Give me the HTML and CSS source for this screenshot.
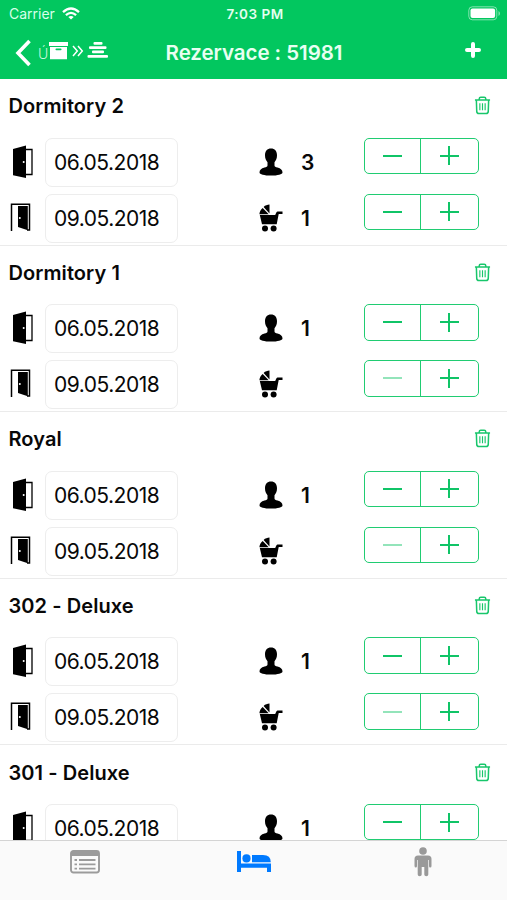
FILE: index.html
```
<!DOCTYPE html>
<html lang="cs">
<head>
<meta charset="utf-8">
<title>Rezervace</title>
<link rel="stylesheet" href="styles.css">
</head>
<body>
<svg class="defs" aria-hidden="true">
  <symbol id="door-in" viewBox="0 0 24 34"><path d="M2 4 15 .5V33L2 30.2Z"/><path d="M15 4.500h6v25h-6" fill="none" stroke="#000" stroke-width="1.300"/><circle cx="12.700" cy="17" r="1" fill="#fff"/></symbol>
  <symbol id="door-out" viewBox="0 0 24 34"><path d="M1.500 31V4.200h18V30h-2.500" fill="none" stroke="#000" stroke-width="1.500"/><path d="M8 6h9.800v24.200L8 27Z"/><circle cx="9.800" cy="18" r="1" fill="#fff"/></symbol>
  <symbol id="person" viewBox="0 0 24 28"><path d="M12 .5c3.800 0 6 2.500 6 6.800 0 3-1 5.400-2.500 6.900v3.200c0 1.200 1.200 1.500 3 2 3.300.9 5 2.600 5 5 0 1.900-4.800 3.100-11.500 3.100S.5 26.300.5 24.400c0-2.400 1.700-4.100 5-5 1.800-.5 3-.8 3-2v-3.200C7 12.700 6 10.300 6 7.300 6 3 8.200.5 12 .5Z"/></symbol>
  <symbol id="pram" viewBox="0 0 24 28"><path d="M10.500 .6v8.800L4.600 2.900C6.300 1.400 8.400.7 10.500.6ZM3.700 3.900l6 6.300H.4c.1-2.600 1.400-4.800 3.300-6.300Z"/><path d="M.8 11h15.400l1-2.300c.4-1 1-1.300 2-1.300h4.300v2.500h-3.800l-2 10.300H3Z"/><circle cx="6" cy="24.600" r="3"/><circle cx="14.600" cy="24.600" r="3"/></symbol>
  <symbol id="trash" viewBox="0 0 18 20"><path d="M1 4.300h16M5.500 4V3q0-1.700 1.700-1.700h3.600q1.700 0 1.700 1.700v1M2.500 4.500l.4 11.700q.1 2.200 2.200 2.200h7.800q2.100 0 2.200-2.200l.4-11.700" stroke-width="1.600"/><path d="M6.200 7.500v7.500M9 7.500v7.500M11.800 7.500v7.500" stroke-width="1.200"/></symbol>
</svg>

<header class="header">
  <div class="status">
    <div class="carrier"><span>Carrier</span>
      <svg width="18" height="13" viewBox="0 0 18 13" fill="none" stroke="#fff" stroke-width="2.300"><path d="M1 5.100q8-7.200 16 0M3.900 8.100q5.100-4.500 10.200 0"/><path d="M6.300 10q2.700-2.200 5.400 0L9 12.600Z" fill="#fff" stroke="none"/></svg>
    </div>
    <div class="clock">7:03 PM</div>
    <svg class="battery" width="33" height="15" viewBox="0 0 33 15"><rect x=".8" y=".8" width="28" height="13" rx="3.500" fill="none" stroke="#fff" stroke-opacity=".5"/><rect x="2.500" y="2.500" width="24.600" height="9.600" rx="2" fill="#fff"/><path d="M30.500 5v5q1.500-.6 1.500-2.500T30.500 5" fill="#fff" fill-opacity=".5"/></svg>
  </div>
  <nav class="navbar">
    <div class="back">
      <svg class="chevron" width="17" height="28" viewBox="0 0 17 28"><path d="M14.500 2 3 14l11.500 12" fill="none" stroke="#fff" stroke-width="3.600"/></svg>
      <span class="thin">Ú</span>
      <svg class="crumbs" width="60" height="20" viewBox="0 0 60 20" fill="#fff"><path d="M0 1h19v4H0ZM1 6h17v12.300H1Z"/><rect x="6.500" y="7.500" width="6" height="1.700" rx=".8" fill="#02c75f"/><path d="m24 5 4.300 5-4.300 5m5-10 4.300 5-4.300 5" fill="none" stroke="#fff" stroke-width="1.500"/><rect x="44.500" y="1" width="9" height="2.800" rx="1"/><rect x="40" y="5.200" width="17.500" height="2.800" rx="1"/><rect x="43" y="9.500" width="12" height="2.800" rx="1"/><rect x="38.500" y="13.900" width="20.500" height="2.900" rx="1"/></svg>
    </div>
    <h1 class="heading">Rezervace : 51981</h1>
    <svg class="add" width="16" height="16" viewBox="0 0 16 16"><path d="M8 2v12M2 8h12" stroke="#fff" stroke-width="4" stroke-linecap="round"/></svg>
  </nav>
</header>

<main class="rooms">
  <section class="room">
    <div class="title"><h2>Dormitory 2</h2><svg class="trash"><use href="#trash"/></svg></div>
    <div class="line"><svg class="door"><use href="#door-in"/></svg><div class="date">06.05.2018</div><svg class="guest"><use href="#person"/></svg><b class="count">3</b><div class="stepper"><i class="minus"></i><i class="plus"></i></div></div>
    <div class="line"><svg class="door out"><use href="#door-out"/></svg><div class="date">09.05.2018</div><svg class="guest"><use href="#pram"/></svg><b class="count">1</b><div class="stepper"><i class="minus"></i><i class="plus"></i></div></div>
  </section>
  <section class="room">
    <div class="title"><h2>Dormitory 1</h2><svg class="trash"><use href="#trash"/></svg></div>
    <div class="line"><svg class="door"><use href="#door-in"/></svg><div class="date">06.05.2018</div><svg class="guest"><use href="#person"/></svg><b class="count">1</b><div class="stepper"><i class="minus"></i><i class="plus"></i></div></div>
    <div class="line"><svg class="door out"><use href="#door-out"/></svg><div class="date">09.05.2018</div><svg class="guest"><use href="#pram"/></svg><b class="count"></b><div class="stepper"><i class="minus off"></i><i class="plus"></i></div></div>
  </section>
  <section class="room">
    <div class="title"><h2>Royal</h2><svg class="trash"><use href="#trash"/></svg></div>
    <div class="line"><svg class="door"><use href="#door-in"/></svg><div class="date">06.05.2018</div><svg class="guest"><use href="#person"/></svg><b class="count">1</b><div class="stepper"><i class="minus"></i><i class="plus"></i></div></div>
    <div class="line"><svg class="door out"><use href="#door-out"/></svg><div class="date">09.05.2018</div><svg class="guest"><use href="#pram"/></svg><b class="count"></b><div class="stepper"><i class="minus off"></i><i class="plus"></i></div></div>
  </section>
  <section class="room">
    <div class="title"><h2>302 - Deluxe</h2><svg class="trash"><use href="#trash"/></svg></div>
    <div class="line"><svg class="door"><use href="#door-in"/></svg><div class="date">06.05.2018</div><svg class="guest"><use href="#person"/></svg><b class="count">1</b><div class="stepper"><i class="minus"></i><i class="plus"></i></div></div>
    <div class="line"><svg class="door out"><use href="#door-out"/></svg><div class="date">09.05.2018</div><svg class="guest"><use href="#pram"/></svg><b class="count"></b><div class="stepper"><i class="minus off"></i><i class="plus"></i></div></div>
  </section>
  <section class="room">
    <div class="title"><h2>301 - Deluxe</h2><svg class="trash"><use href="#trash"/></svg></div>
    <div class="line"><svg class="door"><use href="#door-in"/></svg><div class="date">06.05.2018</div><svg class="guest"><use href="#person"/></svg><b class="count">1</b><div class="stepper"><i class="minus"></i><i class="plus"></i></div></div>
  </section>
</main>

<footer class="tabs">
  <div class="tab"><svg width="30" height="24" viewBox="0 0 30 24"><rect x="1" y="1" width="28" height="21.500" rx="2.500" fill="#fafafa" stroke="#9b9b9b" stroke-width="1.900"/><path d="M1 6V3.500Q1 1 3.500 1h23Q29 1 29 3.500V6Z" fill="#9b9b9b"/><path d="M4.500 10h2.500m2 0h16.500m-21 4.300h2.500m2 0h16.500m-21 4.300h2.500m2 0h16.500" stroke="#9b9b9b" stroke-width="1.800"/></svg></div>
  <div class="tab"><svg width="34" height="22" viewBox="0 0 34 22" fill="#007aff"><path d="M0 0h4v12.500h30V21h-4v-4.200H4V21H0Z"/><circle cx="9.500" cy="7.400" r="4.100"/><path d="M15 4h11q7.800 0 7.800 7.300H15Z"/></svg></div>
  <div class="tab"><svg width="18" height="30" viewBox="0 0 18 30" fill="#999"><circle cx="9" cy="4" r="3.800"/><path d="M4 8.500h10q3.500 0 3.500 3.500v7q0 1.500-1.300 1.500T15 19v-6h-.7v14.500q0 1.800-2 1.800t-2-1.800V20H7.700v7.500q0 1.800-2 1.800t-2-1.800V13H3v6q0 1.500-1.200 1.500T.5 19v-7Q.5 8.500 4 8.500Z"/></svg></div>
</footer>
</body>
</html>
```
FILE: styles.css
```
* { box-sizing: border-box; margin: 0; }
body {
  width: 507px; height: 900px; overflow: hidden;
  display: flex; flex-direction: column;
  background: #fff; color: #080808;
  font-family: Inter, "Liberation Sans", sans-serif;
}
svg { display: block; flex: none; }
.defs { position: absolute; width: 0; height: 0; }

.header { height: 79px; flex: none; background: #02c75f; color: #fff; }
.status { height: 27px; display: grid; grid-template-columns: 1fr 100px 1fr; align-items: center; padding: 0 6px 0 9px; }
.carrier { display: flex; align-items: center; gap: 7px; font-size: 14px; color: #d8ffe9; }
.clock { text-align: center; font-size: 13.5px; font-weight: 600; letter-spacing: .5px; color: #e5fff0; }
.battery { justify-self: end; }
.navbar { height: 51px; display: grid; grid-template-columns: 150px 1fr 150px; align-items: center; padding: 0 0 0 1px; }
.back { display: flex; align-items: center; padding-left: 14px; }
.thin { width: 11px; margin: 2px 0 0 6px; font-size: 14px; font-weight: 300; color: #c7f8dc; }
.crumbs { margin-top: -4px; }
.heading { text-align: center; font-size: 20.5px; font-weight: 600; letter-spacing: -.05px; white-space: nowrap; color: #e8fff2; }
.add { justify-self: end; margin: -6px 26px 0 0; }

.rooms { height: 761px; flex: none; overflow: hidden; }
.room { height: 166.6px; border-bottom: 1.5px solid #ebebeb; }
.title { height: 58.5px; padding: 0 16.5px 4px 8.500px; display: flex; align-items: center; justify-content: space-between; }
.title h2 { font-size: 20px; font-weight: 600; letter-spacing: .08px; }
.trash { width: 17px; height: 19px; margin-top: -1px; fill: none; stroke: #18c66b; }
.line { height: 56px; display: grid; grid-template-columns: 44.5px 133px 80.5px 42px 63.5px 115px; align-items: start; }
.line > .door { grid-column: 1; width: 24px; height: 34px; margin: 7px 0 0 11px; }
.line > .out { margin: 6px 0 0 10px; }
.date { height: 49px; padding-left: 8.500px; border: 1.5px solid #ededed; border-radius: 7px; font-size: 21px; line-height: 47px; letter-spacing: -.5px; }
.guest { grid-column: 4; width: 24px; height: 28px; margin: 10px 0 0 .5px; }
.count { font-size: 21px; font-weight: 600; line-height: 50px; padding-left: 1px; }
.stepper { height: 36.500px; border: 1.5px solid #20cc72; border-radius: 5px; display: grid; grid-template-columns: 1fr 1fr; }
.minus, .plus { display: grid; place-items: center; }
.minus { border-right: 1.5px solid #20cc72; }
.minus::before, .plus::before, .plus::after { content: ""; grid-area: 1 / 1; width: 19px; height: 2px; background: #10c467; }
.plus::after { width: 2px; height: 19px; }
.off::before { opacity: .45; }

.tabs { height: 60px; flex: none; border-top: 1px solid #d4d4d4; background: #fafafa; display: grid; grid-template-columns: repeat(3, 1fr); }
.tab { display: flex; justify-content: center; align-items: center; padding-bottom: 18px; }
```
